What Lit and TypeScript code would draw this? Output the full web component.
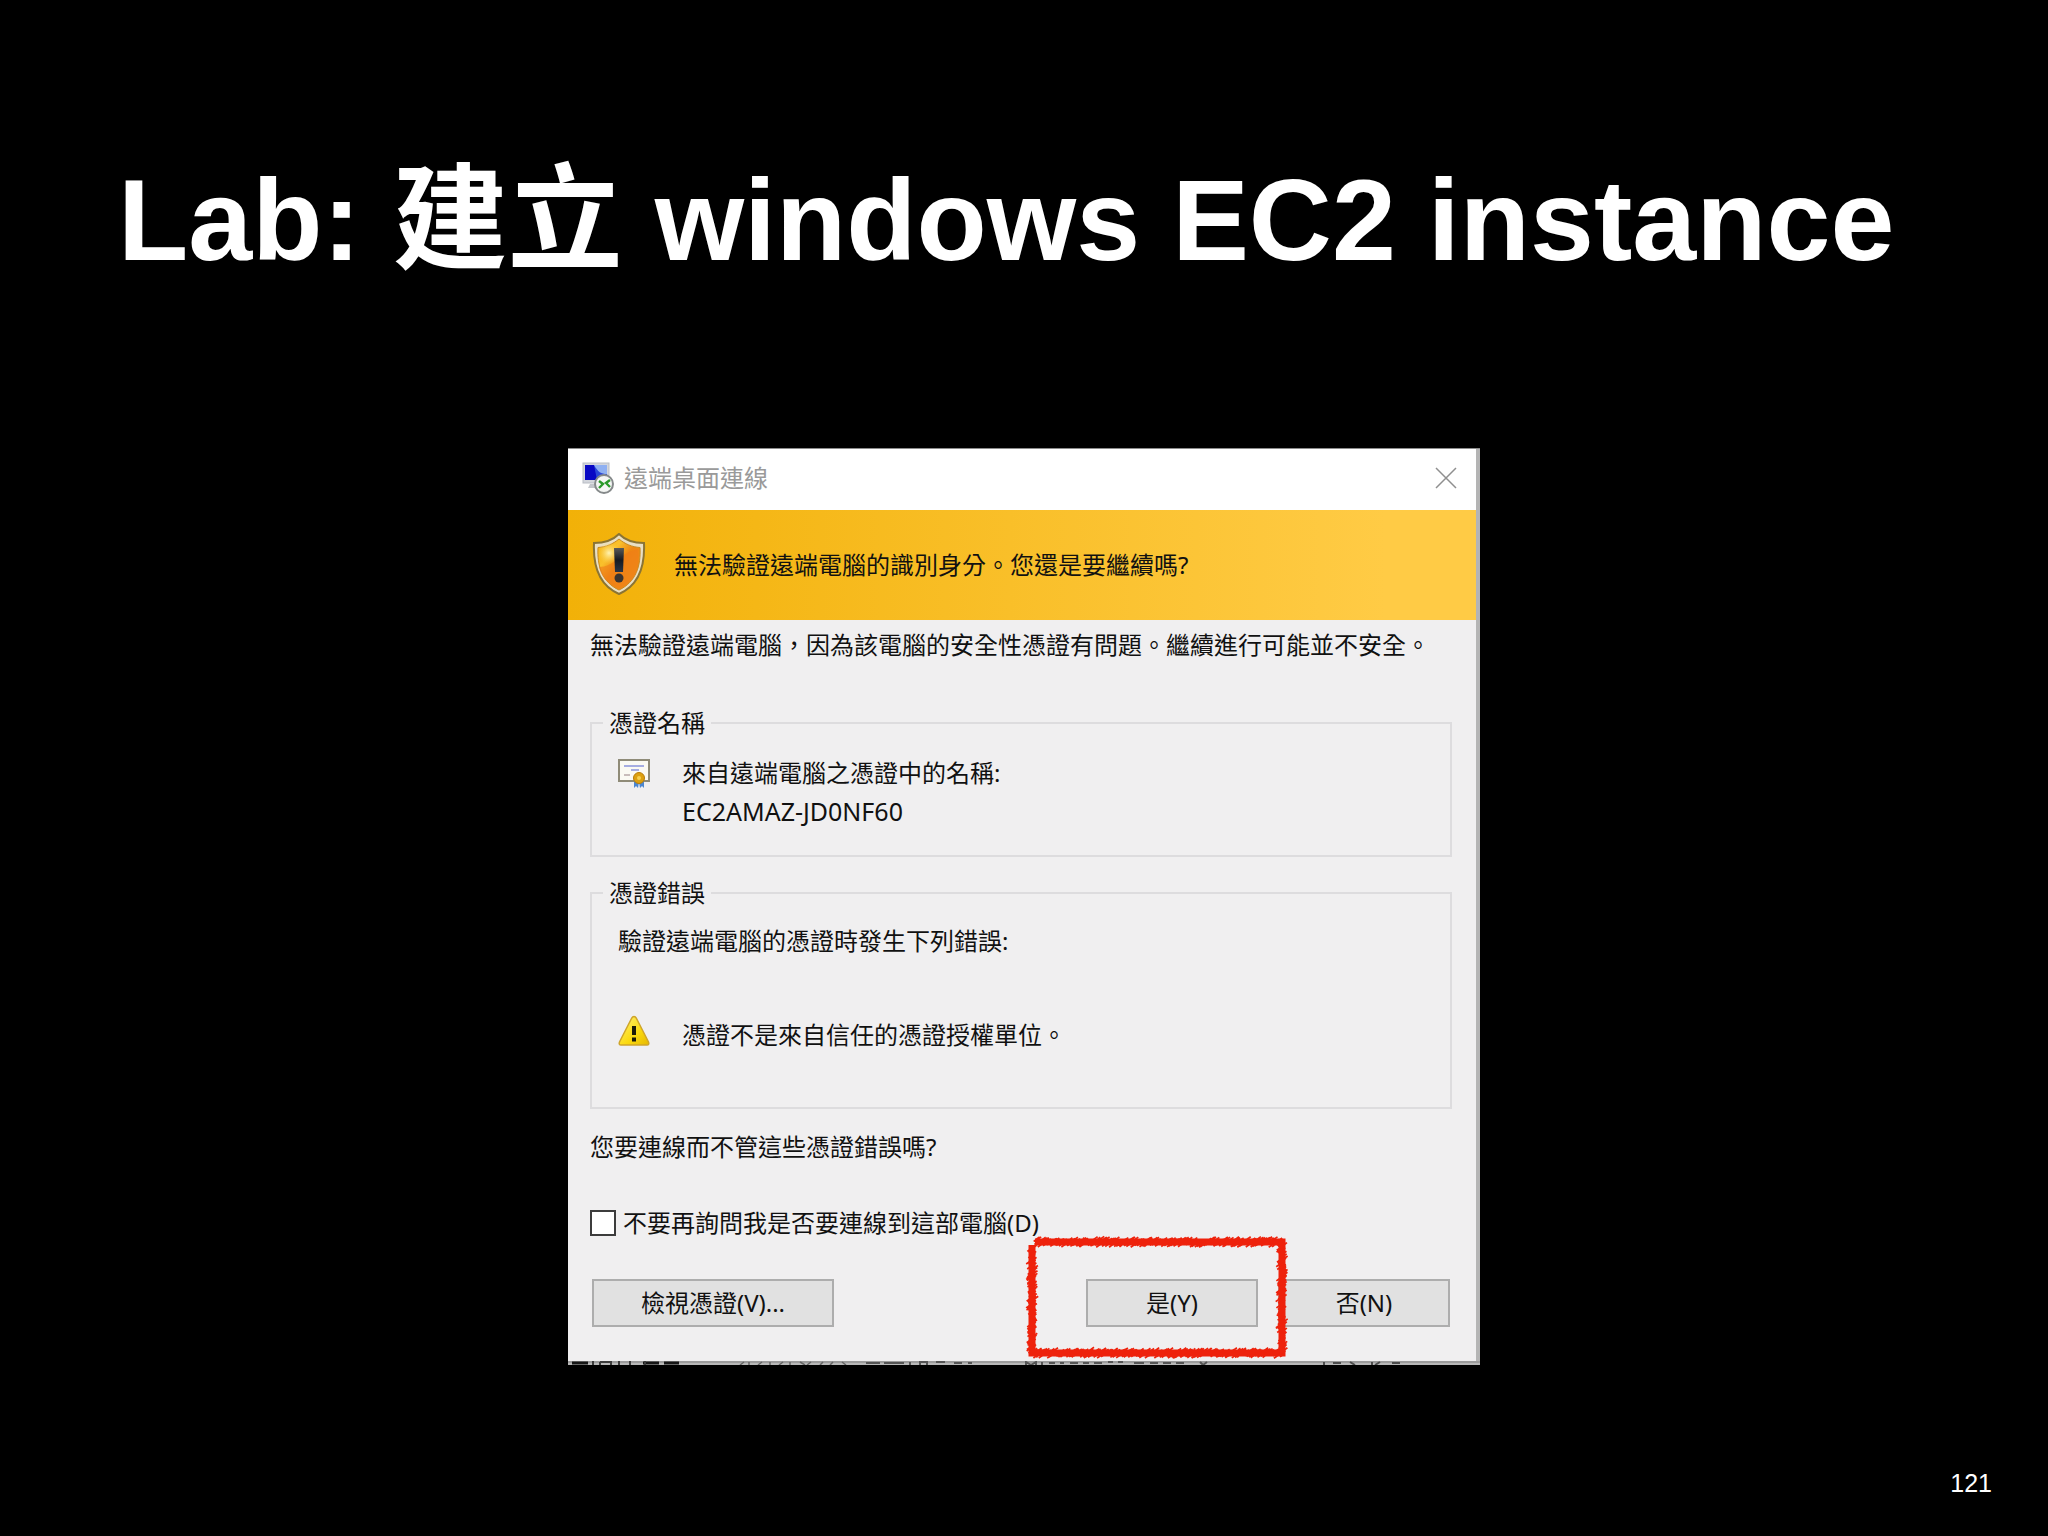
import { LitElement, html, css, svg } from "lit";
import { customElement } from "lit/decorators.js";

/* Small deterministic generator, so the brush outline is drawn the same way every time. */
function seeded(seed: number) {
  let s = seed;
  return () => {
    s = (s * 1664525 + 1013904223) % 4294967296;
    return s / 4294967296;
  };
}

const W = 260;
const H = 120;

/* Builds short slanted dabs along a straight side of the frame. */
function dabs(x1: number, y1: number, x2: number, y2: number, rnd: () => number) {
  const len = Math.hypot(x2 - x1, y2 - y1);
  const horizontal = y1 === y2;
  const n = (v: number) => v.toFixed(1);
  let d = "";
  for (let t = 0; t <= len; t += 0.7) {
    const x = x1 + ((x2 - x1) * t) / len;
    const y = y1 + ((y2 - y1) * t) / len;
    const off = (rnd() - 0.5) * 8;
    const a = 0.8 + rnd() * 1.6;
    const cx = horizontal ? x : x + off;
    const cy = horizontal ? y + off : y;
    d += `M${n(cx - a)} ${n(cy + a * 0.7)}L${n(cx + a)} ${n(cy - a * 0.7)}`;
  }
  return d;
}

function frame() {
  const r = seeded(7);
  return (
    dabs(9, 5, W - 5, 5, r) +
    dabs(W - 5, 5, W - 5, H - 5, r) +
    dabs(W - 5, H - 5, 5, H - 5, r) +
    dabs(5, H - 5, 5, 8, r)
  );
}

const FRAME = frame();

@customElement("brush-frame")
export class BrushFrame extends LitElement {
  static styles = css`
    :host {
      display: block;
      pointer-events: none;
    }
    .frame {
      display: block;
      width: 100%;
      height: 100%;
      overflow: visible;
    }
  `;
  render() {
    return html`<svg class="frame" viewBox="0 0 260 120" preserveAspectRatio="none" aria-hidden="true">
      <path d="M8 5H255V115H5V8" fill="none" stroke="#ee220c" stroke-width="7" />
      <path d=${FRAME} fill="none" stroke="#ee220c" stroke-width="1.7" />
    </svg>`;
  }
}

const remoteIcon = svg`
  <rect x="1" y="1" width="26" height="20" fill="#d3d6dc" stroke="#b9bdc5" />
  <rect x="3" y="3" width="22" height="15" fill="#2a48d8" />
  <path d="M3 3h9l3 15H3z" fill="#0808c4" />
  <path d="M12 3h13v9c-6 0-9-2-13-9z" fill="#8fb0f2" />
  <path d="M8 22h10v4H6z" fill="#c3c6cb" />
  <circle cx="22" cy="22" r="9" fill="#f4f6f4" stroke="#85898a" stroke-width="2" />
  <path d="M17 19l4 3-4 4M28 18l-4 3 4 4" fill="none" stroke="#2a9a2a" stroke-width="2.4" />`;

const shieldIcon = svg`
  <defs>
    <linearGradient id="sg" x1="0" y1="0" x2="1" y2="1">
      <stop offset="0" stop-color="#f6b40c" /><stop offset=".3" stop-color="#f9c02c" />
      <stop offset=".5" stop-color="#ef8512" /><stop offset="1" stop-color="#f39a1c" />
    </linearGradient>
    <radialGradient id="sh"><stop offset="0" stop-color="#fff3b4" /><stop offset="1" stop-color="#fbd250" stop-opacity="0" /></radialGradient>
    <linearGradient id="sm" x1="0" y1="0" x2="0" y2="1"><stop offset="0" stop-color="#5a5a58" /><stop offset=".5" stop-color="#161a22" /><stop offset="1" stop-color="#2a3444" /></linearGradient>
  </defs>
  <path d="M27 1C21 7 12 10 2 10C1 32 6 52 27 61C48 52 53 32 52 10C42 10 33 7 27 1Z" fill="#e9dfc4" stroke="#8a7434" stroke-width="2" />
  <path d="M27 6C21 11 14 14 6 14.500C5 33 10 49 27 57C44 49 49 33 48 14.500C40 14 33 11 27 6Z" fill="url(#sg)" stroke="#c98a20" />
  <path d="M7 34C22 34 24 22 46 16C49 33 44 49 27 56C15 51 9 43 7 34Z" fill="#ee7d18" opacity=".6" />
  <circle cx="17" cy="20" r="11" fill="url(#sh)" />
  <path d="M22 15h10l-1 24h-8z" fill="url(#sm)" />
  <circle cx="27" cy="45" r="4.500" fill="#3a3430" />`;

const certIcon = svg`
  <rect x="1" y="1" width="30" height="21" fill="#fbfaf3" stroke="#8f8b78" stroke-width="2" />
  <path d="M6 7h20M13 11h8" stroke="#8a94dc" stroke-width="1.500" />
  <path d="M6 16h6" stroke="#b9a8a8" stroke-width="1.500" />
  <path d="M16 21v8l2-2 2 2 1-6zM26 21v8l-2-2-2 2-1-6z" fill="#4c86d0" />
  <circle cx="21" cy="19" r="5.500" fill="#dda010" stroke="#b87c08" />
  <circle cx="21" cy="19" r="2" fill="#f7d050" />`;

const warnIcon = svg`
  <defs><linearGradient id="wg" x1="0" y1="0" x2="1" y2="1"><stop offset="0" stop-color="#fff27a" /><stop offset=".6" stop-color="#fbd90e" /><stop offset="1" stop-color="#e6b800" /></linearGradient></defs>
  <path d="M16 1.500Q17.500 1.500 18.500 3.500L30.500 27Q31.500 30 29 30H3Q.5 30 1.500 27L13.500 3.500Q14.500 1.500 16 1.500Z" fill="url(#wg)" stroke="#cfa52a" stroke-width="1.500" />
  <path d="M14 11h4v9h-4zM14 22.500h4v4h-4z" fill="#1c1a08" />`;

/* Tips of the content behind the window that show along its lower edge. */
const edgeMarks = svg`
  <path d="M4 2h16M75 2h16M96 2h15" stroke="#161616" stroke-width="3" />
  <path d="M25 0v4M32 1h11v3M32 1v3M51 0v4M62 0v4M77 0v4" fill="none" stroke="#3c3c3c" stroke-width="2" />
  <path d="M172 4l4-3M181 4V1M190 4l4-3M202 4V1M211 4l4-3M222 4V1M232 1l5 3M243 1l-4 3M252 4l3-3M262 4l3-3M274 1l4 3" stroke="#666" stroke-width="1.500" />
  <path d="M298 2h14M316 2h20M342 4V1M352 4V1h7v3M368 1h9M386 2h8M400 2h4" fill="none" stroke="#555" stroke-width="2" />
  <path d="M458 4V1l5 3 5-3v3M474 1v3M481 2h6M492 2h4M502 2h8M515 2h6M526 2h8M540 1h5M550 1h5M566 2h10M582 2h8M595 2h8M608 2h8M632 1l3 3 4-3" fill="none" stroke="#555" stroke-width="2" />
  <path d="M756 1v3M765 2h8M782 1l5 3M804 1v3M812 1l-5 3M824 2h8" fill="none" stroke="#4c4c4c" stroke-width="2" />`;

@customElement("app-root")
export class AppRoot extends LitElement {
  static styles = css`
    :host {
      display: block;
      background: #000;
      color: #fff;
      font-family: "Liberation Sans", "Noto Sans CJK TC", sans-serif;
    }
    * {
      box-sizing: border-box;
    }
    .slide {
      display: flex;
      flex-direction: column;
      min-height: 100vh;
      padding: 140px 56px 35px;
    }
    .title {
      margin: 0 62px;
      font-size: 115px;
      line-height: 160px;
      font-weight: 700;
    }
    .dialog {
      align-self: center;
      width: 100%;
      max-width: 912px;
      margin-top: 148px;
      color: #111;
      background: #f0eff0;
      border-top: 1px solid #8c8c8c;
      font-family: "Noto Sans", "Noto Sans CJK TC", sans-serif;
      font-size: 24px;
      line-height: 36px;
    }
    .pane {
      border-right: 4px solid #b4b4b4;
    }
    .bar {
      display: flex;
      align-items: center;
      height: 61px;
      padding: 0 19px 3px 14px;
      background: #fff;
      color: #9a9a9a;
    }
    .bar-icon {
      width: 32px;
      height: 32px;
      margin-right: 10px;
    }
    .bar-name {
      flex: 1;
      font-size: 24px;
      font-weight: 400;
      margin: 0;
    }
    .close {
      width: 22px;
      height: 22px;
      padding: 0;
      border: 0;
      background: none;
    }
    .close svg {
      display: block;
    }
    .banner {
      display: flex;
      align-items: center;
      height: 110px;
      padding: 0 24px;
      background: linear-gradient(90deg, #f2b108, #ffcb45 90%);
    }
    .shield {
      width: 54px;
      height: 64px;
      margin-right: 28px;
    }
    .body {
      padding: 7px 24px 34px 22px;
    }
    p {
      margin: 0;
    }
    .group {
      margin: 42px 0 0;
      padding: 14px 26px 24px;
      border: 2px solid #dddcde;
      min-width: 0;
    }
    .group + .group {
      margin-top: 18px;
      padding-bottom: 54px;
      padding-top: 12px;
    }
    .legend {
      padding: 0 6px;
      margin-left: -15px;
    }
    .item {
      display: flex;
      align-items: flex-start;
      gap: 32px;
    }
    .item svg {
      width: 32px;
      height: 32px;
      flex: none;
    }
    .cert svg {
      margin-top: 4px;
    }
    .host {
      font-size: 25px;
      line-height: 40px;
    }
    .errors {
      margin-top: 56px;
    }
    .errors p {
      padding-top: 2px;
    }
    .question {
      margin-top: 20px;
    }
    .ask {
      display: flex;
      align-items: center;
      gap: 7px;
      margin-top: 40px;
    }
    .box {
      appearance: none;
      width: 26px;
      height: 26px;
      margin: 0;
      border: 2px solid #3c3c3c;
      background: #fff;
    }
    .actions {
      display: flex;
      gap: 20px;
      margin-top: 38px;
      padding: 0 2px;
    }
    .btn {
      width: 172px;
      height: 48px;
      padding: 0;
      border: 2px solid #adadad;
      background: #e1e1e1;
      color: inherit;
      font: inherit;
      line-height: 36px;
    }
    .wide {
      width: 242px;
      margin-right: auto;
    }
    .marked {
      position: relative;
    }
    .marked brush-frame {
      position: absolute;
      inset: -42px -29px -31px -59px;
    }
    .edge {
      height: 4px;
      background: linear-gradient(#9c9c9c 50%, #b8b8b8 50%);
    }
    .edge svg {
      display: block;
      width: 100%;
      height: 4px;
    }
    .number {
      margin: auto 0 0;
      text-align: right;
      font-size: 25px;
      line-height: 36px;
    }
  `;

  render() {
    return html`<main class="slide">
      <h1 class="title">Lab: 建立 windows EC2 instance</h1>
      <section class="dialog" role="dialog" aria-labelledby="name">
        <div class="pane">
          <header class="bar">
            <svg class="bar-icon" viewBox="0 0 32 32" aria-hidden="true">${remoteIcon}</svg>
            <h2 class="bar-name" id="name">遠端桌面連線</h2>
            <button class="close" type="button" aria-label="關閉">
              <svg width="22" height="22" viewBox="0 0 22 22"><path d="M1 1L21 21M21 1L1 21" stroke="#8f8f8f" stroke-width="1.500" /></svg>
            </button>
          </header>
          <div class="banner">
            <svg class="shield" viewBox="0 0 54 64" aria-hidden="true">${shieldIcon}</svg>
            <p>無法驗證遠端電腦的識別身分。您還是要繼續嗎?</p>
          </div>
          <div class="body">
            <p>無法驗證遠端電腦，因為該電腦的安全性憑證有問題。繼續進行可能並不安全。</p>
            <fieldset class="group">
              <legend class="legend">憑證名稱</legend>
              <div class="item cert">
                <svg viewBox="0 0 32 32" aria-hidden="true">${certIcon}</svg>
                <div>
                  <p>來自遠端電腦之憑證中的名稱:</p>
                  <p class="host">EC2AMAZ-JD0NF60</p>
                </div>
              </div>
            </fieldset>
            <fieldset class="group">
              <legend class="legend">憑證錯誤</legend>
              <p>驗證遠端電腦的憑證時發生下列錯誤:</p>
              <div class="item errors">
                <svg viewBox="0 0 32 32" aria-hidden="true">${warnIcon}</svg>
                <p>憑證不是來自信任的憑證授權單位。</p>
              </div>
            </fieldset>
            <p class="question">您要連線而不管這些憑證錯誤嗎?</p>
            <div class="ask">
              <input class="box" id="skip" type="checkbox" />
              <label for="skip">不要再詢問我是否要連線到這部電腦(D)</label>
            </div>
            <div class="actions">
              <button class="btn wide" type="button">檢視憑證(V)...</button>
              <div class="marked">
                <button class="btn" type="button">是(Y)</button>
                <brush-frame></brush-frame>
              </div>
              <button class="btn" type="button">否(N)</button>
            </div>
          </div>
        </div>
        <div class="edge"><svg viewBox="0 0 912 4" preserveAspectRatio="none" aria-hidden="true">${edgeMarks}</svg></div>
      </section>
      <p class="number">121</p>
    </main>`;
  }
}
